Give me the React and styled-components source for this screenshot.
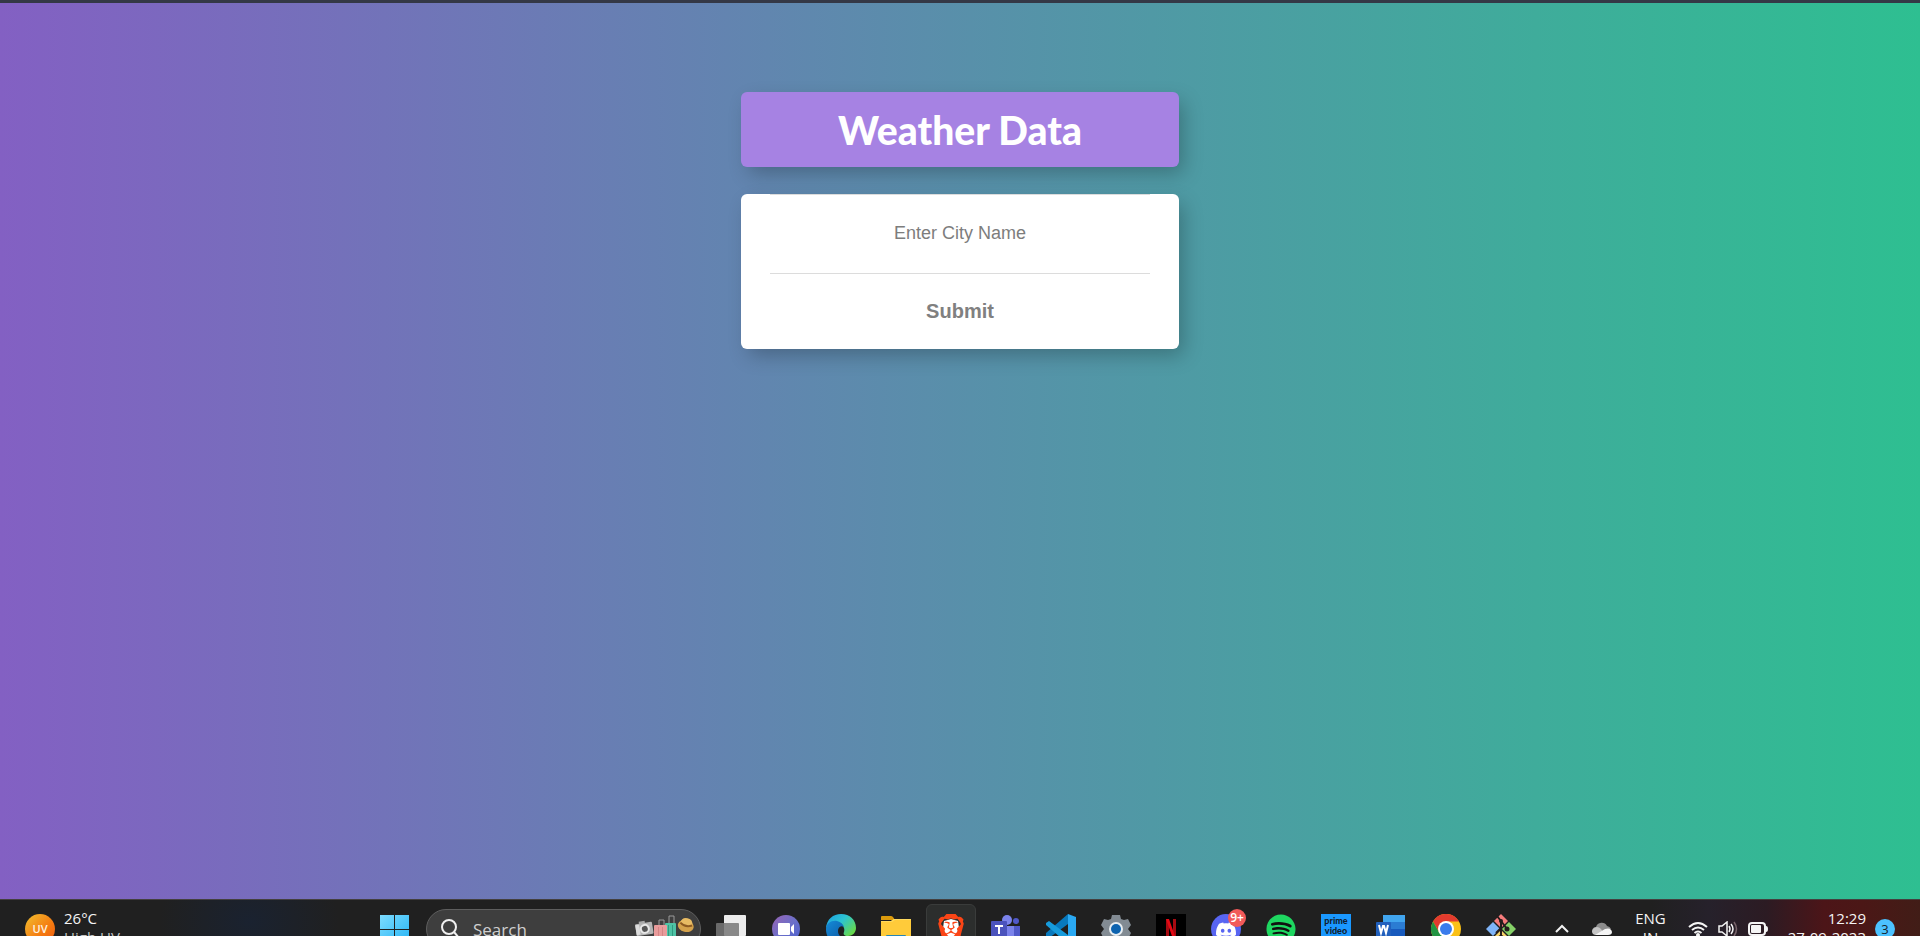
import React from "react";
import styled, { createGlobalStyle } from "styled-components";
import { SiBrave, SiDiscord } from "react-icons/si";
import { FaSpotify } from "react-icons/fa";

const GlobalStyle = createGlobalStyle`
  *, *::before, *::after { box-sizing: border-box; }
  body {
    margin: 0;
    font-family: "Liberation Sans", Arial, sans-serif;
    overflow: hidden;
  }
  h1, p { margin: 0; }
`;

const Screen = styled.div`
  display: flex;
  flex-direction: column;
  height: 100vh;
  overflow: hidden;
`;

const WindowEdge = styled.div`
  flex: none;
  height: 3px;
  background: #343846;
`;

const Page = styled.main`
  flex: 1;
  min-height: 0;
  display: flex;
  flex-direction: column;
  align-items: center;
  gap: 27px;
  padding: 89px 16px 0;
  background: linear-gradient(to right, #8360c3, #2ebf91);
`;

const Panel = styled.div`
  width: 100%;
  max-width: 438px;
  border-radius: 6px;
  box-shadow: 6px 8px 20px -2px rgba(0, 0, 0, 0.25);
`;

const TitlePanel = styled(Panel)`
  padding: 12px 16px 11px;
  background: #a682e3;
`;

const Title = styled.h1`
  color: #fff;
  font-family: Lato, sans-serif;
  font-size: 39px;
  font-weight: 900;
  line-height: 52px;
  text-align: center;
`;

const FormPanel = styled(Panel)`
  padding: 0 29px;
  background: #fff;
`;

const CityForm = styled.form`
  display: flex;
  flex-direction: column;
`;

const CityInput = styled.input`
  width: 100%;
  height: 80px;
  padding: 0 0 2px;
  border: solid #dcdcdc;
  border-width: 1px 0;
  outline: none;
  background: none;
  color: #555;
  font-family: inherit;
  font-size: 18px;
  text-align: center;
  &::placeholder { color: #7d7d7d; opacity: 1; }
`;

const SubmitButton = styled.button`
  height: 75px;
  padding: 0;
  border: 0;
  background: none;
  color: #808080;
  font-family: inherit;
  font-size: 20px;
  font-weight: 700;
`;

const TaskbarClip = styled.footer`
  flex: none;
  height: 37px;
  overflow: hidden;
  border-top: 1px solid #44403f;
  background:
    radial-gradient(ellipse 90px 70px at 13% 60%, #1a2230 0%, transparent 100%),
    linear-gradient(to right, #202020 86%, #26212b 89%, #2c1b23 92%, #4c1518 95%, #4b1716 97%, #411d17 100%);
`;

const Taskbar = styled.div`
  display: grid;
  grid-template-columns: 1fr auto 1fr;
  align-items: center;
  height: 58px;
  padding-right: 25px;
  color: #f4f4f4;
  font-family: "Open Sans", "Noto Sans", sans-serif;
  font-size: 15px;
  line-height: 19px;
`;

const Weather = styled.button`
  display: flex;
  align-items: center;
  gap: 9px;
  padding: 0 0 0 25px;
  border: 0;
  background: none;
  color: inherit;
  font: inherit;
  text-align: left;
`;

const TwoLines = styled.div`
  padding-bottom: 2px;
`;

const UvBadge = styled.span`
  display: grid;
  place-items: center;
  width: 30px;
  height: 30px;
  padding-bottom: 2px;
  border-radius: 50%;
  background: linear-gradient(135deg, #f0c030, #f57a10 60%, #ee5a10);
  color: #fff3e0;
  font-size: 11px;
  font-weight: 600;
`;

const Muted = styled.p`
  color: #c4c4c4;
`;

const Apps = styled.nav`
  display: flex;
  align-items: center;
  gap: 5px;
`;

const AppButton = styled.button`
  position: relative;
  display: grid;
  place-items: center;
  width: 50px;
  height: 50px;
  padding: 0;
  border: 1px solid ${({ $active }) => ($active ? "#3a3c3b" : "transparent")};
  border-radius: 6px;
  background: ${({ $active }) => ($active ? "#2c2e2d" : "none")};
  svg { display: block; }
`;

const SearchBox = styled.label`
  display: flex;
  align-items: center;
  gap: 14px;
  width: 275px;
  height: 40px;
  margin-left: 2px;
  padding: 0 6px 0 14px;
  border: 1px solid #5e5e5e;
  border-radius: 20px;
  background: #3e3e3e;
  svg { flex: none; }
`;

const SearchInput = styled.input`
  flex: 1;
  min-width: 0;
  padding: 2px 0 0;
  border: 0;
  outline: none;
  background: none;
  color: #fff;
  font: 17px/24px "Open Sans", "Noto Sans", sans-serif;
  &::placeholder { color: #cfcfcf; opacity: 1; }
`;

const CountBadge = styled.span`
  position: absolute;
  top: 4px;
  right: 4px;
  width: 18px;
  height: 18px;
  border-radius: 50%;
  background: #f25a5a;
  color: #fff;
  font: 600 12px/17px "Open Sans", sans-serif;
  text-align: center;
`;

const PrimeTile = styled.span`
  width: 30px;
  height: 30px;
  padding-top: 2px;
  background: #1a98ff;
  color: #10202e;
  font: 900 9px/10px Lato, sans-serif;
  text-align: center;
`;

const Tray = styled.div`
  display: flex;
  align-items: center;
  justify-content: flex-end;
`;

const TrayButton = styled.button`
  display: flex;
  align-items: center;
  gap: ${({ $gap }) => $gap || 0}px;
  margin-right: ${({ $after }) => $after || 0}px;
  padding: 0;
  border: 0;
  background: none;
  color: inherit;
  font: inherit;
  text-align: ${({ $align }) => $align || "center"};
`;

const Notice = styled.span`
  width: 20px;
  height: 20px;
  border-radius: 50%;
  background: #4cc2ff;
  color: #16242e;
  font-size: 13px;
  line-height: 20px;
  text-align: center;
`;

const Icon = ({ size = 30, children, ...rest }) => (
  <svg width={size} height={size} viewBox="0 0 30 30" aria-hidden="true" {...rest}>
    {children}
  </svg>
);

const WindowsIcon = () => (
  <Icon>
    <defs>
      <linearGradient id="win" x1="0" y1="0" x2="1" y2="1" gradientUnits="objectBoundingBox">
        <stop offset="0" stopColor="#7ddcff" />
        <stop offset="1" stopColor="#25b4f5" />
      </linearGradient>
    </defs>
    <path fill="url(#win)" d="M1 1h14v14H1zM16 1h14v14H16zM1 16h14v14H1zM16 16h14v14H16z" />
  </Icon>
);

const TaskViewIcon = () => (
  <Icon>
    <rect x="8" y="1" width="22" height="21" rx="1" fill="#ececec" />
    <rect x="0" y="9" width="23" height="20" rx="1" fill="#777" opacity=".86" />
  </Icon>
);

const ChatIcon = () => (
  <Icon>
    <defs>
      <linearGradient id="chat" x1="0" y1="0" x2="1" y2="1">
        <stop offset="0" stopColor="#9a63b4" />
        <stop offset=".5" stopColor="#6b6fc8" />
        <stop offset="1" stopColor="#4b5fd0" />
      </linearGradient>
    </defs>
    <circle cx="15" cy="15" r="14" fill="url(#chat)" />
    <rect x="7" y="9" width="12" height="12" rx="1" fill="#fff" />
    <path d="M20 13l3-3v10l-3-3z" fill="#fff" />
  </Icon>
);

const EdgeIcon = () => (
  <Icon>
    <defs>
      <linearGradient id="edgeTop" x1="0" y1="0" x2="1" y2=".7">
        <stop offset="0" stopColor="#1b9de2" />
        <stop offset=".5" stopColor="#2cc3d2" />
        <stop offset="1" stopColor="#68d94b" />
      </linearGradient>
      <linearGradient id="edgeLow" x1="0" y1="0" x2="1" y2="1">
        <stop offset="0" stopColor="#148bd8" />
        <stop offset="1" stopColor="#0b4c96" />
      </linearGradient>
    </defs>
    <path fill="url(#edgeTop)" d="M0 14C1 5 7 0 15 0c9 0 15 6 15 14 0 5-4 8-8 8-4 0-5-2-4-4 1-3 0-6-4-8-5-2-11-1-14 4z" />
    <path fill="url(#edgeLow)" d="M0 15c0-6 6-9 11-8 4 1 6 3 7 6-4-2-6 1-6 4 0 5 5 9 13 8-3 3-6 5-10 5C6 30 0 24 0 15z" />
  </Icon>
);

const FolderIcon = () => (
  <Icon>
    <path fill="#dc9b0c" d="M0 3q0-1 1-1h9q1 0 2 1l2 3H0z" />
    <path fill="#ffcb3a" d="M0 7h10l3-2h16q1 0 1 1v21H0z" />
    <path fill="#ffd95e" d="M0 7h10l3-2h17v1H14l-3 2H0z" />
    <path fill="#2786b5" d="M5 22q0-1 1-1h18q1 0 1 1v6H5z" />
  </Icon>
);

const BraveIcon = () => (
  <Icon>
    <path fill="#fff" d="M8 7l7-2 7 2 1 7-4 10-4 3-4-3-4-10z" />
    <SiBrave size={30} color="#fb4516" />
  </Icon>
);

const TeamsIcon = () => (
  <Icon>
    <circle cx="16" cy="6" r="5" fill="#7b83eb" />
    <circle cx="25" cy="7" r="3" fill="#5059c9" />
    <path fill="#5059c9" d="M20 12h9v10q0 4-4 4h-5z" />
    <path fill="#7b83eb" d="M9 12h14v11q-1 6-7 6-5 0-7-5z" />
    <rect x="0" y="7" width="16" height="16" rx="1" fill="#4b53bc" />
    <path fill="#fff" d="M4 11h8v2H9v7H7v-7H4z" />
  </Icon>
);

const CodeIcon = () => (
  <Icon>
    <path fill="#0879bd" d="M22 0L0 19v3l3 2 19-14z" />
    <path fill="#169bdc" d="M0 9l3-2 19 14v9L0 11z" />
    <path fill="#2aa9f3" d="M22 0l8 3v24l-8 3z" />
  </Icon>
);

const SettingsIcon = () => (
  <Icon>
    <path
      fill="#828b93"
      d="M11 1h8l1 4 3 1 4-1 3 6-3 4 3 4-3 6-4-1-3 2-1 4h-8l-1-4-3-2-4 1-3-6 3-4-3-4 3-6 4 1 3-1z"
    />
    <circle cx="15" cy="15" r="7" fill="#e8eef2" />
    <circle cx="15" cy="15" r="5" fill="#0d63af" />
  </Icon>
);

const NetflixIcon = () => (
  <Icon>
    <path fill="#000" d="M0 0h30v30H0z" />
    <path fill="#a70a11" d="M10 5h3v20h-3zM17 5h3v20h-3z" />
    <path fill="#e50914" d="M10 5h3l7 20h-3z" />
  </Icon>
);

const DiscordIcon = () => (
  <Icon>
    <circle cx="15" cy="15" r="15" fill="#5865f2" />
    <SiDiscord x="5" y="6" size={20} color="#fff" />
  </Icon>
);

const SpotifyIcon = () => (
  <Icon>
    <circle cx="15" cy="15" r="13" fill="#111" />
    <FaSpotify size={30} color="#1ed760" />
  </Icon>
);

const WordIcon = () => (
  <Icon>
    <path fill="#41a5ee" d="M7 1h22v7H7z" />
    <path fill="#2b7cd3" d="M7 8h22v7H7z" />
    <path fill="#185abd" d="M7 15h22v14H7z" />
    <rect x="0" y="8" width="15" height="15" rx="1" fill="#2160bd" />
    <path fill="none" stroke="#fff" strokeWidth="2" d="M3 11l2 8 2-7h1l2 7 2-8" />
  </Icon>
);

const ChromeIcon = () => (
  <Icon>
    <circle cx="15" cy="15" r="15" fill="#fbc116" />
    <path fill="#e33b2e" d="M2 7.5A15 15 0 0 1 28 7.5H15L8.5 19z" />
    <path fill="#229342" d="M2 7.5L8.5 19 15 22.5 13 30A15 15 0 0 1 2 7.5z" />
    <circle cx="15" cy="15" r="8" fill="#fff" />
    <circle cx="15" cy="15" r="6" fill="#3a7cec" />
  </Icon>
);

const GitIcon = () => (
  <Icon>
    <path fill="#f67b7b" d="M15 0l7 7-7 7-7-7z" />
    <path fill="#7fb4f8" d="M7 8l7 7-7 7-7-7z" />
    <path fill="#86d168" d="M23 8l7 7-7 7-7-7z" />
    <path fill="#f6d269" d="M15 16l7 7-7 7-7-7z" />
    <path fill="none" stroke="#251c1c" strokeWidth="2" d="M11 2l4 5v17M15 7l6 8M15 14l-5 5" />
    <circle cx="15" cy="7" r="2" fill="#251c1c" />
    <circle cx="21" cy="15" r="2.500" fill="#251c1c" />
    <circle cx="15" cy="24" r="3" fill="#251c1c" />
  </Icon>
);

const SearchIcon = () => (
  <svg width="18" height="20" viewBox="0 0 18 20" fill="none" stroke="#f0f0f0" strokeWidth="2" aria-hidden="true">
    <circle cx="8" cy="8" r="7" />
    <path d="M13 13l5 6" />
  </svg>
);

const TravelArt = () => (
  <svg width="60" height="32" viewBox="0 0 60 32" aria-hidden="true">
    <g transform="rotate(-9 10 17)">
      <path fill="#a9a9a9" d="M6 8h6v4H6z" />
      <rect x="2" y="10" width="17" height="12" rx="1" fill="#b5b5b5" />
      <path fill="#ddd" d="M2 11h4v10H2z" />
      <circle cx="11" cy="16" r="5" fill="#e8e8e8" />
      <circle cx="11" cy="16" r="3" fill="#555" />
    </g>
    <path fill="none" stroke="#999" strokeWidth="1" d="M35 10V3h5v7M25 13V7h5v6" />
    <rect x="31" y="10" width="11" height="22" rx="1" fill="#4ec3a5" />
    <path stroke="#319a80" d="M34.500 12v20M38.500 12v20" />
    <rect x="20" y="12" width="13" height="20" rx="1" fill="#e99b9b" />
    <path stroke="#d48484" d="M24.500 14v18M28.500 14v18" />
    <g transform="rotate(14 52 12)">
      <ellipse cx="52" cy="13" rx="8" ry="6" fill="#d5a24b" />
      <path fill="#e8bb63" d="M46 11q0-6 6-6t6 6q-6 4-12 0z" />
      <path fill="none" stroke="#8e5b22" strokeWidth="2" d="M46 11q6 4 12 0" />
    </g>
  </svg>
);

const ChevronIcon = () => (
  <svg width="14" height="10" viewBox="0 0 14 10" fill="none" stroke="#f2f2f2" strokeWidth="2" aria-hidden="true">
    <path d="M1 8l6-6 6 6" />
  </svg>
);

const CloudIcon = () => (
  <svg width="20" height="14" viewBox="0 0 20 14" aria-hidden="true">
    <path fill="#8d8d8d" d="M4 5a6 6 0 0 1 11-1 5 5 0 0 1 4 3l-8 4H1C-1 8 1 5 4 5z" />
    <path fill="#c5c5c5" d="M1 7q4-4 8 0l4 6H4q-4 0-4-4z" />
    <path fill="#f5f5f5" d="M3 13l10-6q6-2 7 3 0 3-4 3z" />
  </svg>
);

const WifiIcon = () => (
  <svg width="20" height="16" viewBox="0 0 20 16" fill="none" stroke="#f5f5f5" strokeWidth="2" aria-hidden="true">
    <path d="M1 6q9-8 18 0M4 9q6-5 12 0M6.500 12q3.500-3 7 0" />
    <circle cx="10" cy="14" r="2" fill="#f5f5f5" stroke="none" />
  </svg>
);

const SpeakerIcon = () => (
  <svg width="20" height="16" viewBox="0 0 20 16" fill="none" stroke="#f5f5f5" strokeWidth="1.500" aria-hidden="true">
    <path d="M1 5h3l5-4v14l-5-4H1z" />
    <path d="M11 5q2 3 0 6M13 3q4 5 0 10" />
    <path d="M16 1q5 7 0 14" stroke="#77636a" />
  </svg>
);

const BatteryIcon = () => (
  <svg width="20" height="14" viewBox="0 0 20 14" aria-hidden="true">
    <rect x="1" y="1" width="16" height="12" rx="3" fill="none" stroke="#f5f5f5" strokeWidth="2" />
    <rect x="3" y="3" width="10" height="8" rx="1" fill="#f5f5f5" />
    <path fill="#f5f5f5" d="M18 4q2 0 2 3t-2 3z" />
  </svg>
);

const PrimeIcon = () => (
  <PrimeTile>
    prime
    <br />
    video
  </PrimeTile>
);

const pinnedApps = [
  { name: "Task view", Art: TaskViewIcon },
  { name: "Chat", Art: ChatIcon },
  { name: "Edge", Art: EdgeIcon },
  { name: "File Explorer", Art: FolderIcon },
  { name: "Brave", Art: BraveIcon, active: true },
  { name: "Teams", Art: TeamsIcon },
  { name: "Visual Studio Code", Art: CodeIcon },
  { name: "Settings", Art: SettingsIcon },
  { name: "Netflix", Art: NetflixIcon },
  { name: "Discord", Art: DiscordIcon, count: "9+" },
  { name: "Spotify", Art: SpotifyIcon },
  { name: "Prime Video", Art: PrimeIcon },
  { name: "Word", Art: WordIcon },
  { name: "Chrome", Art: ChromeIcon },
  { name: "Git", Art: GitIcon },
];

export default function App() {
  return (
    <Screen>
      <GlobalStyle />
      <WindowEdge />
      <Page>
        <TitlePanel>
          <Title>Weather Data</Title>
        </TitlePanel>
        <FormPanel>
          <CityForm onSubmit={(event) => event.preventDefault()}>
            <CityInput type="text" name="city" placeholder="Enter City Name" aria-label="City name" />
            <SubmitButton type="submit">Submit</SubmitButton>
          </CityForm>
        </FormPanel>
      </Page>
      <TaskbarClip>
        <Taskbar>
          <Weather type="button">
            <UvBadge>UV</UvBadge>
            <TwoLines>
              <p>26°C</p>
              <Muted>High UV</Muted>
            </TwoLines>
          </Weather>
          <Apps aria-label="Taskbar">
            <AppButton type="button" aria-label="Start">
              <WindowsIcon />
            </AppButton>
            <SearchBox>
              <SearchIcon />
              <SearchInput type="text" placeholder="Search" aria-label="Search" />
              <TravelArt />
            </SearchBox>
            {pinnedApps.map(({ name, Art, active, count }) => (
              <AppButton key={name} type="button" aria-label={name} $active={active}>
                <Art />
                {count && <CountBadge>{count}</CountBadge>}
              </AppButton>
            ))}
          </Apps>
          <Tray>
            <TrayButton type="button" aria-label="Show hidden icons" $after={23}>
              <ChevronIcon />
            </TrayButton>
            <TrayButton type="button" aria-label="OneDrive" $after={23}>
              <CloudIcon />
            </TrayButton>
            <TrayButton type="button" $after={22}>
              <TwoLines>
                ENG
                <br />
                IN
              </TwoLines>
            </TrayButton>
            <TrayButton type="button" aria-label="Network, volume and battery" $gap={10} $after={20}>
              <WifiIcon />
              <SpeakerIcon />
              <BatteryIcon />
            </TrayButton>
            <TrayButton type="button" $gap={9} $align="right">
              <TwoLines>
                12:29
                <br />
                27-09-2023
              </TwoLines>
              <Notice>3</Notice>
            </TrayButton>
          </Tray>
        </Taskbar>
      </TaskbarClip>
    </Screen>
  );
}
